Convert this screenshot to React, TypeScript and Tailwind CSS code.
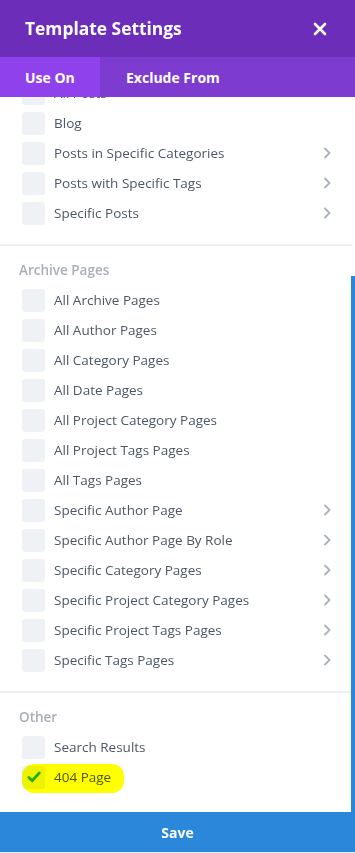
import React from "react";

const Chevron = () => (
  <svg width="8" height="12" viewBox="0 0 8 12" className="shrink-0">
    <path d="M2 1.5 L6.5 6 L2 10.5" fill="none" stroke="#a9b1bb" strokeWidth="1.8" strokeLinecap="round" strokeLinejoin="round" />
  </svg>
);

type Item = { label: string; arrow?: boolean; checked?: boolean };

const Row = ({ item }: { item: Item }) => (
  <div className="flex h-[30px] items-center pl-[22px] pr-[24px]">
    <div className="flex h-[23px] w-[23px] shrink-0 items-center justify-center rounded-[3px] bg-[#eef1f6]">
      {item.checked && (
        <svg width="14" height="12" viewBox="0 0 14 12">
          <path d="M1.8 6.6 L5.2 9.8 L12.2 2" fill="none" stroke="#1fb01f" strokeWidth="2.8" strokeLinecap="round" strokeLinejoin="round" />
        </svg>
      )}
    </div>
    <span className="ml-[9px] flex-1 text-[13.5px] leading-[18px] text-[#4c5866]">{item.label}</span>
    {item.arrow && <Chevron />}
  </div>
);

const Heading = ({ children }: { children: React.ReactNode }) => (
  <div className="mt-[15px] mb-[6px] pl-[19px] text-[13.5px] font-semibold leading-[18px] text-[#a7afb9]">{children}</div>
);

const Divider = () => <div className="mt-[16px] mr-[3px] h-[2px] bg-[#edf0f5]" />;

export default function App() {
  const posts: Item[] = [
    { label: "All Posts" },
    { label: "Blog" },
    { label: "Posts in Specific Categories", arrow: true },
    { label: "Posts with Specific Tags", arrow: true },
    { label: "Specific Posts", arrow: true },
  ];
  const archive: Item[] = [
    { label: "All Archive Pages" },
    { label: "All Author Pages" },
    { label: "All Category Pages" },
    { label: "All Date Pages" },
    { label: "All Project Category Pages" },
    { label: "All Project Tags Pages" },
    { label: "All Tags Pages" },
    { label: "Specific Author Page", arrow: true },
    { label: "Specific Author Page By Role", arrow: true },
    { label: "Specific Category Pages", arrow: true },
    { label: "Specific Project Category Pages", arrow: true },
    { label: "Specific Project Tags Pages", arrow: true },
    { label: "Specific Tags Pages", arrow: true },
  ];
  return (
    <div className="flex h-[853px] w-[355px] flex-col overflow-hidden bg-white" style={{ fontFamily: '"Open Sans", sans-serif' }}>
      <div className="flex h-[57px] shrink-0 items-center justify-between bg-[#6c2eb9] pl-[25px] pr-[28px]">
        <span className="text-[17.4px] font-bold text-white">Template Settings</span>
        <svg width="14" height="14" viewBox="0 0 14 14">
          <path d="M2 2 L12 12 M12 2 L2 12" stroke="white" strokeWidth="2.6" strokeLinecap="round" />
        </svg>
      </div>
      <div className="relative z-10 flex h-[40px] shrink-0 bg-[#7e3bd0] text-[14px] font-bold text-white">
        <div className="flex w-[100px] items-center bg-[#8f42ec] pl-[25px]">Use On</div>
        <div className="flex items-center pl-[26px]">Exclude From</div>
      </div>
      <div className="relative flex-1 overflow-hidden">
        <div className="mt-[-19px]">
          {posts.map((p) => <Row key={p.label} item={p} />)}
          <Divider />
          <Heading>Archive Pages</Heading>
          {archive.map((p) => <Row key={p.label} item={p} />)}
          <Divider />
          <Heading>Other</Heading>
          <Row item={{ label: "Search Results" }} />
          <div className="relative">
            <Row item={{ label: "404 Page", checked: true }} />
            <div className="pointer-events-none absolute left-[22px] top-[2px] h-[29px] w-[102px] rounded-[12px] bg-[#ffff00] mix-blend-multiply" />
          </div>
        </div>
        <div className="absolute right-0 top-[179px] bottom-0 w-[4px] bg-[#2b87da]" />
      </div>
      <div className="flex h-[41px] shrink-0 items-center justify-center border-b border-[#e8eef5] bg-[#2b87da] text-[14px] font-bold text-white">
        Save
      </div>
    </div>
  );
}
